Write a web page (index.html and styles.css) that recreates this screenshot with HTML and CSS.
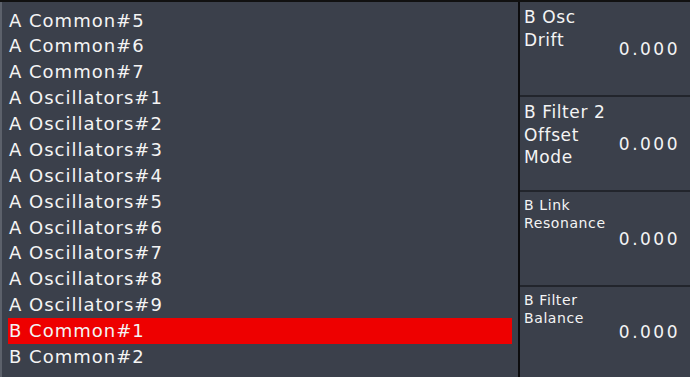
FILE: index.html
```html
<!DOCTYPE html>
<html lang="en">
<head>
    <meta charset="UTF-8">
    <meta name="viewport" content="width=device-width, initial-scale=1.0">
    <title>Patch Browser</title>
    <link rel="stylesheet" href="styles.css">
</head>
<body>
    <div class="app">
        <div class="list">
            <div class="row">A Common#5</div>
            <div class="row">A Common#6</div>
            <div class="row">A Common#7</div>
            <div class="row">A Oscillators#1</div>
            <div class="row">A Oscillators#2</div>
            <div class="row">A Oscillators#3</div>
            <div class="row">A Oscillators#4</div>
            <div class="row">A Oscillators#5</div>
            <div class="row">A Oscillators#6</div>
            <div class="row">A Oscillators#7</div>
            <div class="row">A Oscillators#8</div>
            <div class="row">A Oscillators#9</div>
            <div class="row selected">B Common#1</div>
            <div class="row">B Common#2</div>
        </div>
        <div class="params">
            <div class="param">
                <div class="label">B Osc<br>Drift</div>
                <div class="value">0.000</div>
            </div>
            <div class="param">
                <div class="label">B Filter 2<br>Offset<br>Mode</div>
                <div class="value">0.000</div>
            </div>
            <div class="param small">
                <div class="label">B Link<br>Resonance</div>
                <div class="value">0.000</div>
            </div>
            <div class="param small">
                <div class="label">B Filter<br>Balance</div>
                <div class="value">0.000</div>
            </div>
        </div>
    </div>
</body>
</html>
```
FILE: styles.css
```css
body {
    margin: 0;
    background-color: #111;
    font-family: "DejaVu Sans", sans-serif;
    color: #f4f4f4;
}

.app {
    display: flex;
    height: 375px;
    border-top: 2px solid #111;
    background-color: #3b404b;
}

.list {
    width: 520px;
    box-sizing: border-box;
    border-left: 2px solid #5c616b;
    border-right: 2px solid #0c0c0e;
    padding: 5.5px 6px 0 6px;
}

.row {
    height: 25.875px;
    line-height: 25.875px;
    font-size: 18px;
    letter-spacing: 1px;
    padding-left: 1px;
    white-space: nowrap;
}

.row.selected {
    background-color: #ee0000;
}

.params {
    flex: 1;
    display: flex;
    flex-direction: column;
}

.param {
    position: relative;
    height: 95px;
    border-bottom: 2px solid #22252c;
    box-sizing: border-box;
    padding: 4px 4px 0 4px;
}

.param:last-child {
    border-bottom: none;
    flex: 1;
}

.label {
    font-size: 17px;
    line-height: 22.5px;
    letter-spacing: 0.6px;
}

.param.small .label {
    font-size: 14px;
    line-height: 18px;
    letter-spacing: 0.6px;
}

.value {
    position: absolute;
    right: 10px;
    top: 50%;
    transform: translateY(-50%);
    font-size: 17px;
    letter-spacing: 2.5px;
}
```
